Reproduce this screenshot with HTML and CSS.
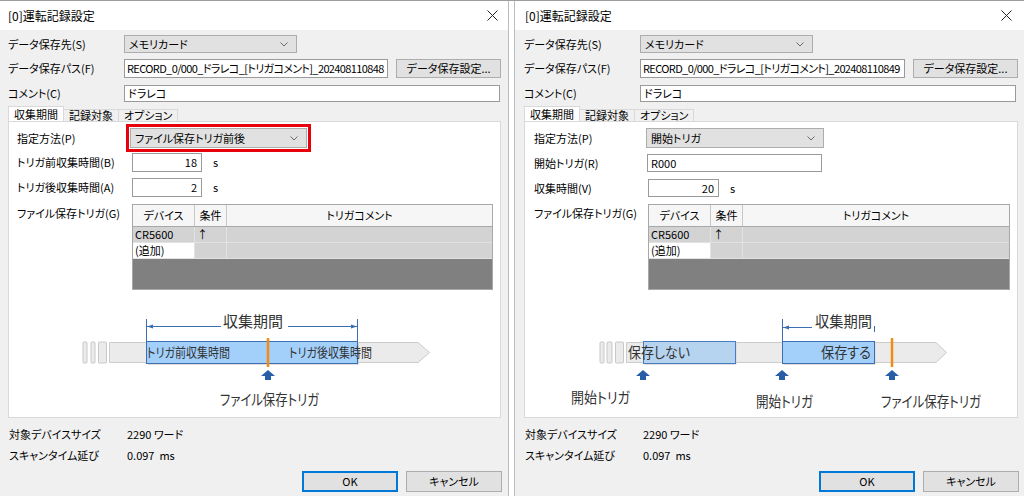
FILE: index.html
```html
<!DOCTYPE html>
<html lang="ja">
<head>
<meta charset="utf-8">
<title>運転記録設定</title>
<link rel="stylesheet" href="styles.css">
</head>
<body>
<div class="screen">
  <!-- LEFT DIALOG -->
  <div class="dialog dlg-left">
    <div class="titlebar">
      <span class="title">[0]運転記録設定</span>
      <svg class="close" width="11" height="11" viewBox="0 0 11 11"><path d="M0.5 0.5L10.5 10.5M10.5 0.5L0.5 10.5"/></svg>
    </div>
    <div class="body">
      <div class="row r1">
        <span class="lbl">データ保存先(S)</span>
        <div class="combo c-dest"><span>メモリカード</span><svg class="chev" width="8" height="5" viewBox="0 0 8 5"><path d="M0.5 0.5L4 4L7.5 0.5"/></svg></div>
      </div>
      <div class="row r2">
        <span class="lbl">データ保存パス(F)</span>
        <div class="textbox t-path"><span class="ptxt">RECORD_0/000_ドラレコ_[トリガコメント]_202408110848</span></div>
        <div class="btn b-set">データ保存設定...</div>
      </div>
      <div class="row r3">
        <span class="lbl">コメント(C)</span>
        <div class="textbox t-comment">ドラレコ</div>
      </div>
      <div class="tabs">
        <div class="tab sel">収集期間</div>
        <div class="tab">記録対象</div>
        <div class="tab">オプション</div>
      </div>
      <div class="panel">
        <div class="pform">
          <div class="prow">
            <span class="plbl">指定方法(P)</span>
            <div class="pick red">
              <div class="combo c-method"><span>ファイル保存トリガ前後</span><svg class="chev" width="8" height="5" viewBox="0 0 8 5"><path d="M0.5 0.5L4 4L7.5 0.5"/></svg></div>
            </div>
          </div>
          <div class="prow in1">
            <span class="plbl">トリガ前収集時間(B)</span>
            <div class="num">18</div><span class="unit">s</span>
          </div>
          <div class="prow in2">
            <span class="plbl">トリガ後収集時間(A)</span>
            <div class="num">2</div><span class="unit">s</span>
          </div>
          <div class="prow gridrow">
            <span class="plbl">ファイル保存トリガ(G)</span>
            <div class="tgrid">
              <div class="gh"><span class="c1">デバイス</span><span class="c2">条件</span><span class="c3">トリガコメント</span></div>
              <div class="gr"><span class="c1">CR5600</span><span class="c2">↑</span><span class="c3"></span></div>
              <div class="gr"><span class="c1 white">(追加)</span><span class="c2"></span><span class="c3"></span></div>
            </div>
          </div>
        </div>
        <svg class="diagram" width="491" height="127" viewBox="0 0 491 127">
          <rect class="stub" x="74" y="52" width="4" height="21" rx="1"/>
          <rect class="stub" x="82" y="52" width="4" height="21" rx="1"/>
          <rect class="stub" x="89.5" y="52" width="8" height="21" rx="1"/>
          <polygon class="bar" points="100.5,52.5 409,52.5 420.5,62.5 409,72.5 100.5,72.5"/>
          <rect class="shadow" x="139" y="53" width="211" height="22"/>
          <rect class="sel" x="137.5" y="51.5" width="211" height="22"/>
          <text class="dt t13" x="138" y="67" textLength="83" lengthAdjust="spacingAndGlyphs">トリガ前収集時間</text>
          <text class="dt t13" x="280" y="67" textLength="83" lengthAdjust="spacingAndGlyphs">トリガ後収集時間</text>
          <line class="orange" x1="259" y1="48" x2="259" y2="77"/>
          <path class="uparrow" d="M259 80L266 86L262 86L262 90L256 90L256 86L252 86Z"/>
          <line class="dim" x1="137.5" y1="29" x2="137.5" y2="51"/>
          <line class="dim" x1="348.5" y1="29" x2="348.5" y2="51"/>
          <line class="dim" x1="138" y1="36.5" x2="212" y2="36.5"/>
          <line class="dim" x1="279" y1="36.5" x2="348" y2="36.5"/>
          <path class="dimhead" d="M138 36.5L144 34.5L144 38.5Z"/>
          <path class="dimhead" d="M348 36.5L342 34.5L342 38.5Z"/>
          <text class="dt t15" x="214" y="37" textLength="60" lengthAdjust="spacingAndGlyphs">収集期間</text>
          <text class="dt t15" x="211" y="115" textLength="99" lengthAdjust="spacingAndGlyphs">ファイル保存トリガ</text>
        </svg>
      </div>
      <div class="info">
        <div class="irow"><span class="ilbl">対象デバイスサイズ</span><span>2290 ワード</span></div>
        <div class="irow"><span class="ilbl">スキャンタイム延び</span><span>0.097&nbsp; ms</span></div>
      </div>
      <div class="btns">
        <div class="btn b-ok">OK</div>
        <div class="btn b-cancel">キャンセル</div>
      </div>
    </div>
  </div>

  <!-- RIGHT DIALOG -->
  <div class="dialog dlg-right">
    <div class="titlebar">
      <span class="title">[0]運転記録設定</span>
      <svg class="close" width="11" height="11" viewBox="0 0 11 11"><path d="M0.5 0.5L10.5 10.5M10.5 0.5L0.5 10.5"/></svg>
    </div>
    <div class="body">
      <div class="row r1">
        <span class="lbl">データ保存先(S)</span>
        <div class="combo c-dest"><span>メモリカード</span><svg class="chev" width="8" height="5" viewBox="0 0 8 5"><path d="M0.5 0.5L4 4L7.5 0.5"/></svg></div>
      </div>
      <div class="row r2">
        <span class="lbl">データ保存パス(F)</span>
        <div class="textbox t-path"><span class="ptxt">RECORD_0/000_ドラレコ_[トリガコメント]_202408110849</span></div>
        <div class="btn b-set">データ保存設定...</div>
      </div>
      <div class="row r3">
        <span class="lbl">コメント(C)</span>
        <div class="textbox t-comment">ドラレコ</div>
      </div>
      <div class="tabs">
        <div class="tab sel">収集期間</div>
        <div class="tab">記録対象</div>
        <div class="tab">オプション</div>
      </div>
      <div class="panel">
        <div class="pform">
          <div class="prow">
            <span class="plbl">指定方法(P)</span>
            <div class="pick">
              <div class="combo c-method"><span>開始トリガ</span><svg class="chev" width="8" height="5" viewBox="0 0 8 5"><path d="M0.5 0.5L4 4L7.5 0.5"/></svg></div>
            </div>
          </div>
          <div class="prow in1r">
            <span class="plbl">開始トリガ(R)</span>
            <div class="textbox t-start">R000</div>
          </div>
          <div class="prow in2r">
            <span class="plbl">収集時間(V)</span>
            <div class="num numr">20</div><span class="unit">s</span>
          </div>
          <div class="prow gridrow">
            <span class="plbl">ファイル保存トリガ(G)</span>
            <div class="tgrid tgrid-r">
              <div class="gh"><span class="c1">デバイス</span><span class="c2">条件</span><span class="c3">トリガコメント</span></div>
              <div class="gr"><span class="c1">CR5600</span><span class="c2">↑</span><span class="c3"></span></div>
              <div class="gr"><span class="c1 white">(追加)</span><span class="c2"></span><span class="c3"></span></div>
            </div>
          </div>
        </div>
        <svg class="diagram" width="491" height="127" viewBox="0 0 491 127">
          <rect class="stub" x="75" y="52" width="4" height="21" rx="1"/>
          <rect class="stub" x="82" y="52" width="5" height="21" rx="1"/>
          <rect class="stub" x="90.5" y="52" width="8" height="21" rx="1"/>
          <polygon class="bar" points="101.5,52.5 411,52.5 421.5,62.5 411,72.5 101.5,72.5"/>
          <rect class="shadow" x="119.5" y="53" width="92" height="22"/>
          <rect class="pale" x="118.5" y="51.5" width="92" height="22"/>
          <rect class="shadow" x="258.5" y="53" width="92" height="22"/>
          <rect class="sel" x="257.5" y="51.5" width="92" height="22"/>
          <text class="dt t14" x="103" y="68" textLength="62" lengthAdjust="spacingAndGlyphs">保存しない</text>
          <text class="dt t14" x="296" y="68" textLength="50" lengthAdjust="spacingAndGlyphs">保存する</text>
          <line class="orange" x1="367" y1="48" x2="367" y2="77"/>
          <path class="uparrow" d="M118 80L125 86L121 86L121 90L115 90L115 86L111 86Z"/>
          <path class="uparrow" d="M257 80L264 86L260 86L260 90L254 90L254 86L250 86Z"/>
          <path class="uparrow" d="M367 80L374 86L370 86L370 90L364 90L364 86L360 86Z"/>
          <line class="dim" x1="257.5" y1="29" x2="257.5" y2="51"/>
          <line class="dim" x1="349.5" y1="36" x2="349.5" y2="42"/>
          <line class="dim" x1="258" y1="37.5" x2="287" y2="37.5"/>
          <path class="dimhead" d="M258 37.5L264 35.5L264 39.5Z"/>
          <text class="dt t15" x="290" y="37" textLength="57" lengthAdjust="spacingAndGlyphs">収集期間</text>
          <text class="dt t15" x="46" y="113" textLength="59" lengthAdjust="spacingAndGlyphs">開始トリガ</text>
          <text class="dt t15" x="231" y="117" textLength="57" lengthAdjust="spacingAndGlyphs">開始トリガ</text>
          <text class="dt t15" x="356" y="117" textLength="100" lengthAdjust="spacingAndGlyphs">ファイル保存トリガ</text>
        </svg>
      </div>
      <div class="info">
        <div class="irow"><span class="ilbl">対象デバイスサイズ</span><span>2290 ワード</span></div>
        <div class="irow"><span class="ilbl">スキャンタイム延び</span><span>0.097&nbsp; ms</span></div>
      </div>
      <div class="btns">
        <div class="btn b-ok">OK</div>
        <div class="btn b-cancel">キャンセル</div>
      </div>
    </div>
  </div>
</div>
</body>
</html>
```

FILE: styles.css
```css
* { box-sizing: border-box; }
html, body { margin: 0; padding: 0; background: #ffffff; }
body {
  font-family: "Noto Sans CJK JP", "Noto Sans", sans-serif;
  font-size: 11px;
  font-feature-settings: "palt";
  color: #000;
  line-height: 1;
}
.screen {
  display: flex;
  gap: 5px;
  width: 1024px;
  height: 496px;
  border-top: 1px solid #9c9c9c;
  overflow: hidden;
}
.dialog {
  display: flex;
  flex-direction: column;
  background: #f0f0f0;
  height: 495px;
}
.dlg-left { width: 509px; border-right: 1px solid #bdbdbd; }
.dlg-right { width: 510px; border-left: 1px solid #bdbdbd; }

.titlebar {
  height: 29px;
  background: #fff;
  display: flex;
  align-items: center;
  justify-content: space-between;
  padding: 0 10px 0 8px;
  flex: none;
}
.dlg-right .titlebar { padding: 0 12px 0 10px; }
.title { font-size: 12px; }
.close path { stroke: #222; stroke-width: 1; fill: none; }

.body { padding: 5px 7px 0 8px; flex: 1; }
.dlg-right .body { padding: 5px 6px 0 9px; }

.row { display: flex; align-items: center; }
.lbl { width: 116px; flex: none; }
.r1 { height: 18px; }
.r2 { height: 19px; margin-top: 6px; }
.r3 { height: 17px; margin-top: 7px; }

.combo {
  height: 100%;
  background: #e1e1e1;
  border: 1px solid #adadad;
  display: flex;
  align-items: center;
  justify-content: space-between;
  padding: 0 8px 0 4px;
}
.chev path { stroke: #6b6b6b; stroke-width: 1; fill: none; }
.c-dest { width: 173px; }

.textbox {
  height: 100%;
  background: #fff;
  border: 1px solid #9a9a9a;
  display: flex;
  align-items: center;
  padding: 0 3px;
  white-space: nowrap;
  overflow: hidden;
}
.t-path { width: 265px; padding: 0 2px; }
.ptxt { letter-spacing: -0.62px; white-space: nowrap; }
.t-comment { width: 376px; }

.btn {
  background: #e1e1e1;
  border: 1px solid #adadad;
  display: flex;
  align-items: center;
  justify-content: center;
}
.b-set { width: 105px; height: 19px; margin-left: 8px; }

.tabs { display: flex; align-items: flex-end; height: 15px; margin-top: 4px; }
.tab {
  height: 12px;
  padding: 0 5px;
  border: 1px solid #d9d9d9;
  border-bottom: none;
  display: flex;
  align-items: center;
  background: #f0f0f0;
  margin-left: -1px;
}
.tab.sel {
  height: 15px;
  background: #fff;
  width: 56px;
  justify-content: center;
  margin-left: 0;
  position: relative;
  z-index: 1;
}

.panel {
  background: #fff;
  border: 1px solid #d9d9d9;
  height: 297px;
}
.pform { padding: 2px 0 0 8px; }
.prow { display: flex; align-items: center; }
.plbl { width: 109px; flex: none; }
.dlg-right .plbl { width: 109px; padding-left: 1px; }

.pick {
  border: 3px solid transparent;
  padding: 1px;
  width: 185px;
  height: 28px;
}
.pick.red { border-color: #e8000b; }
.c-method { width: 100%; }
.dlg-right .pick { width: 186px; }

.in1 { height: 19px; margin-top: 1px; }
.in2 { height: 19px; margin-top: 6px; }
.in1r { height: 18px; margin-top: 2px; }
.in2r { height: 18px; margin-top: 7px; }

.num {
  width: 70px;
  height: 100%;
  margin-left: 6px;
  background: #fff;
  border: 1px solid #9a9a9a;
  display: flex;
  align-items: center;
  justify-content: flex-end;
  padding-right: 4px;
}
.numr { width: 71px; }
.unit { margin-left: 11px; }
.t-start { width: 175px; margin-left: 5px; }

.gridrow { align-items: flex-start; margin-top: 7px; }
.gridrow .plbl { padding-top: 4px; }
.tgrid {
  width: 361px;
  height: 86px;
  margin-left: 6px;
  border: 1px solid #a8a8a8;
  background: #808080;
}
.tgrid-r { width: 362px; }
.gh, .gr { display: grid; grid-template-columns: 62px 32px 1fr; }
.gh { height: 22px; background: #f6f6f6; border-bottom: 1px solid #a8a8a8; }
.gh span { display: flex; align-items: center; justify-content: center; border-right: 1px solid #c8c8c8; }
.gh span:last-child { border-right: none; }
.gr { height: 16px; background: #d3d3d3; border-bottom: 1px solid #e2e2e2; }
.gr span { display: flex; align-items: center; padding-left: 2px; border-right: 1px solid #e2e2e2; }
.gr span:last-child { border-right: none; }
.gr .white { background: #fff; }

.diagram { display: block; font-feature-settings: "palt"; }
.stub { fill: #ebebeb; stroke: #c8c8c8; stroke-width: 1; }
.bar { fill: #ebebeb; stroke: #cccccc; stroke-width: 1; }
.shadow { fill: #c9c9c9; opacity: 0.6; }
.sel { fill: #a3d0fb; stroke: #3f6fb0; stroke-width: 1; }
.pale { fill: #b6d3ef; stroke: #4a7cc0; stroke-width: 1; }
.dt { fill: #333; font-family: "Noto Sans CJK JP", sans-serif; }
.t13 { font-size: 13px; }
.t14 { font-size: 15px; }
.t15 { font-size: 15px; }
.orange { stroke: #f38a12; stroke-width: 2.5; }
.uparrow { fill: #285ea6; }
.dim { stroke: #3b6db3; stroke-width: 1; }
.dimhead { fill: #3b6db3; }

.info { padding: 6px 0 0 1px; }
.irow { height: 21px; display: flex; align-items: center; }
.ilbl { width: 118px; flex: none; }

.btns { display: flex; justify-content: flex-end; gap: 8px; margin-top: 5px; margin-right: -1px; }
.b-ok, .b-cancel { width: 96px; height: 21px; }
.b-ok { border: 1px solid #0078d7; box-shadow: inset 0 0 0 1px #0078d7; }
```
